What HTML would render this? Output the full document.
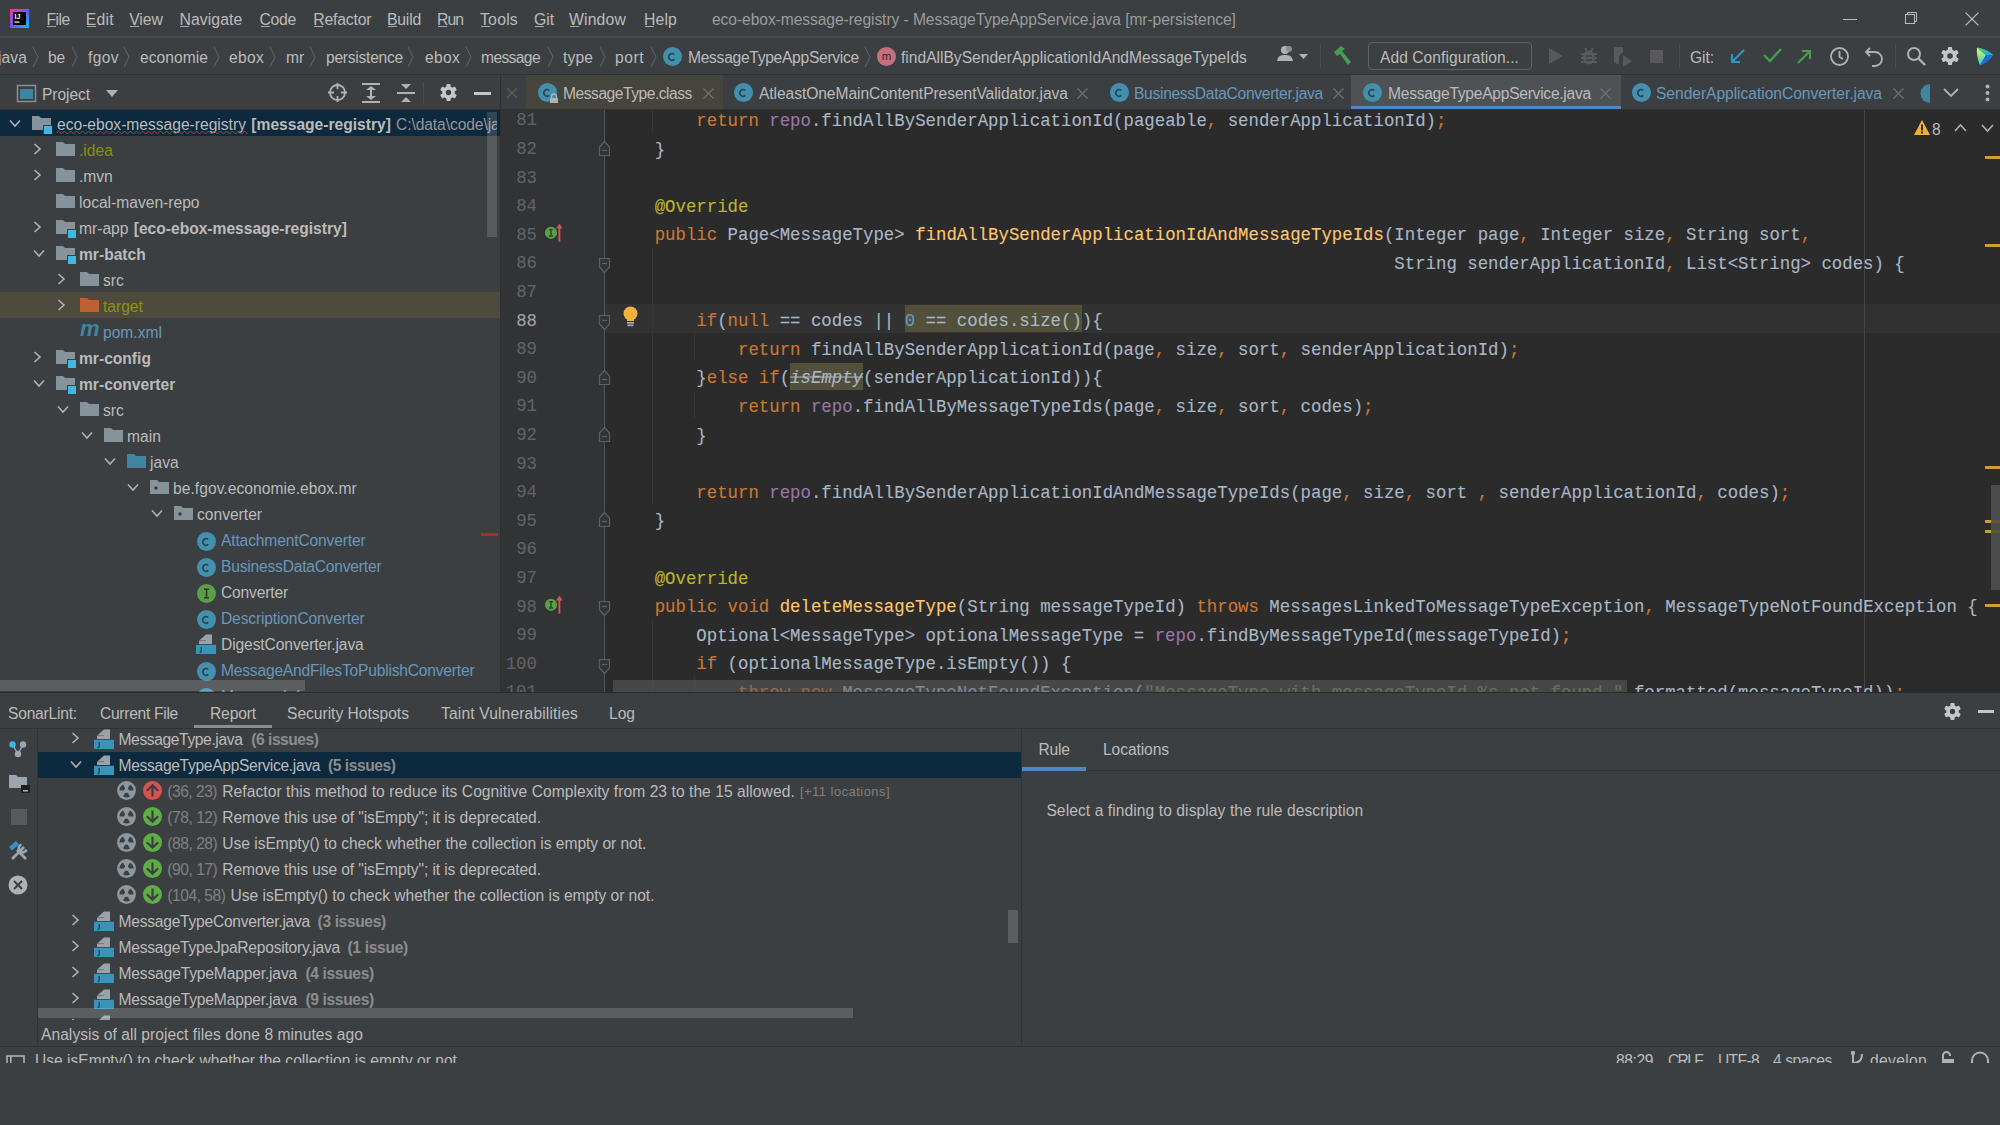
<!DOCTYPE html><html><head><meta charset="utf-8"><style>
html,body{margin:0;padding:0;}
body{width:2000px;height:1125px;overflow:hidden;background:#3C3F41;position:relative;font-family:"Liberation Sans",sans-serif;}
.t{position:absolute;white-space:pre;line-height:1;}
.r{position:absolute;}
.s{position:absolute;overflow:visible;}
.code{position:absolute;font-family:"Liberation Mono",monospace;white-space:pre;line-height:28.6px;transform:scaleY(1.07);transform-origin:0 19px;-webkit-text-stroke:0.12px currentColor;}
.k{color:#CC7832}.f{color:#9876AA}.m{color:#FFC66D}.a{color:#BBB529}.n{color:#6897BB}.st{color:#6A8759}
</style></head><body>
<div class="r" style="left:0px;top:36px;width:2000px;height:2px;background:#48494B;"></div>
<svg class="s" style="left:10px;top:9px;" width="19" height="19" viewBox="0 0 19 19"><defs><linearGradient id="lg" x1="0" y1="0" x2="1" y2="1"><stop offset="0" stop-color="#FF318C"/><stop offset="0.5" stop-color="#6B57FF"/><stop offset="1" stop-color="#07C3F2"/></linearGradient></defs><rect x="0" y="0" width="19" height="19" fill="url(#lg)"/><rect x="3" y="3" width="13" height="13" fill="#000"/><text x="4.5" y="10" font-size="7" font-weight="bold" fill="#fff" font-family="Liberation Sans">IJ</text><rect x="4.5" y="12.5" width="5" height="1.2" fill="#fff"/></svg>
<div class="t " style="left:46.4px;top:12.0px;font-size:15.8px;color:#BBBBBB;letter-spacing:-0.539px;">File</div>
<div class="r" style="left:47px;top:26px;width:9px;height:1px;background:#BBBBBB;opacity:.85"></div>
<div class="t " style="left:85.8px;top:12.0px;font-size:15.8px;color:#BBBBBB;letter-spacing:0.194px;">Edit</div>
<div class="r" style="left:87px;top:26px;width:9px;height:1px;background:#BBBBBB;opacity:.85"></div>
<div class="t " style="left:129.2px;top:12.0px;font-size:15.8px;color:#BBBBBB;letter-spacing:-0.090px;">View</div>
<div class="r" style="left:130px;top:26px;width:9px;height:1px;background:#BBBBBB;opacity:.85"></div>
<div class="t " style="left:179.4px;top:12.0px;font-size:15.8px;color:#BBBBBB;letter-spacing:0.081px;">Navigate</div>
<div class="r" style="left:180px;top:26px;width:9px;height:1px;background:#BBBBBB;opacity:.85"></div>
<div class="t " style="left:259.5px;top:12.0px;font-size:15.8px;color:#BBBBBB;letter-spacing:-0.367px;">Code</div>
<div class="r" style="left:261px;top:26px;width:9px;height:1px;background:#BBBBBB;opacity:.85"></div>
<div class="t " style="left:313.3px;top:12.0px;font-size:15.8px;color:#BBBBBB;letter-spacing:-0.214px;">Refactor</div>
<div class="r" style="left:314px;top:26px;width:9px;height:1px;background:#BBBBBB;opacity:.85"></div>
<div class="t " style="left:387.0px;top:12.0px;font-size:15.8px;color:#BBBBBB;letter-spacing:-0.227px;">Build</div>
<div class="r" style="left:388px;top:26px;width:9px;height:1px;background:#BBBBBB;opacity:.85"></div>
<div class="t " style="left:437.0px;top:12.0px;font-size:15.8px;color:#BBBBBB;letter-spacing:-0.994px;">Run</div>
<div class="r" style="left:438px;top:26px;width:9px;height:1px;background:#BBBBBB;opacity:.85"></div>
<div class="t " style="left:480.0px;top:12.0px;font-size:15.8px;color:#BBBBBB;letter-spacing:0.223px;">Tools</div>
<div class="r" style="left:481px;top:26px;width:9px;height:1px;background:#BBBBBB;opacity:.85"></div>
<div class="t " style="left:534.0px;top:12.0px;font-size:15.8px;color:#BBBBBB;letter-spacing:-0.063px;">Git</div>
<div class="r" style="left:535px;top:26px;width:9px;height:1px;background:#BBBBBB;opacity:.85"></div>
<div class="t " style="left:569.0px;top:12.0px;font-size:15.8px;color:#BBBBBB;letter-spacing:0.134px;">Window</div>
<div class="r" style="left:570px;top:26px;width:9px;height:1px;background:#BBBBBB;opacity:.85"></div>
<div class="t " style="left:644.0px;top:12.0px;font-size:15.8px;color:#BBBBBB;letter-spacing:0.127px;">Help</div>
<div class="r" style="left:645px;top:26px;width:9px;height:1px;background:#BBBBBB;opacity:.85"></div>
<div class="t " style="left:712.0px;top:12.2px;font-size:15.6px;color:#9A9C9E;letter-spacing:-0.068px;">eco-ebox-message-registry - MessageTypeAppService.java [mr-persistence]</div>
<div class="r" style="left:1843px;top:19px;width:14px;height:1px;background:#BBBBBB;"></div>
<svg class="s" style="left:1904px;top:11px;" width="14" height="14" viewBox="0 0 14 14"><rect x="1.5" y="3.5" width="9" height="9" fill="none" stroke="#BBB" stroke-width="1"/><path d="M3.5 3.5V1.5H12.5V10.5H10.5" fill="none" stroke="#BBB" stroke-width="1"/></svg>
<svg class="s" style="left:1965px;top:12px;" width="14" height="14" viewBox="0 0 14 14"><path d="M0.6 0.6L13.4 13.4M13.4 0.6L0.6 13.4" stroke="#BBB" stroke-width="1.3"/></svg>
<div class="r" style="left:0px;top:74px;width:2000px;height:1px;background:#323232;"></div>
<div class="t " style="left:-2.0px;top:49.8px;font-size:15.6px;color:#BBBBBB;letter-spacing:0.096px;">java</div>
<div class="t " style="left:48.0px;top:49.8px;font-size:15.6px;color:#BBBBBB;letter-spacing:-0.175px;">be</div>
<div class="t " style="left:88.0px;top:49.8px;font-size:15.6px;color:#BBBBBB;letter-spacing:0.379px;">fgov</div>
<div class="t " style="left:140.0px;top:49.8px;font-size:15.6px;color:#BBBBBB;letter-spacing:0.046px;">economie</div>
<div class="t " style="left:229.0px;top:49.8px;font-size:15.6px;color:#BBBBBB;letter-spacing:0.294px;">ebox</div>
<div class="t " style="left:286.0px;top:49.8px;font-size:15.6px;color:#BBBBBB;letter-spacing:-0.094px;">mr</div>
<div class="t " style="left:326.0px;top:49.8px;font-size:15.6px;color:#BBBBBB;letter-spacing:-0.252px;">persistence</div>
<div class="t " style="left:425.0px;top:49.8px;font-size:15.6px;color:#BBBBBB;letter-spacing:0.294px;">ebox</div>
<div class="t " style="left:481.0px;top:49.8px;font-size:15.6px;color:#BBBBBB;letter-spacing:-0.614px;">message</div>
<div class="t " style="left:563.0px;top:49.8px;font-size:15.6px;color:#BBBBBB;letter-spacing:0.129px;">type</div>
<div class="t " style="left:615.0px;top:49.8px;font-size:15.6px;color:#BBBBBB;letter-spacing:0.530px;">port</div>
<svg class="s" style="left:32px;top:46px;" width="8" height="22" viewBox="0 0 8 22"><path d="M1 1L6 11L1 21" fill="none" stroke="#5E6060" stroke-width="1.1"/></svg>
<svg class="s" style="left:71px;top:46px;" width="8" height="22" viewBox="0 0 8 22"><path d="M1 1L6 11L1 21" fill="none" stroke="#5E6060" stroke-width="1.1"/></svg>
<svg class="s" style="left:123px;top:46px;" width="8" height="22" viewBox="0 0 8 22"><path d="M1 1L6 11L1 21" fill="none" stroke="#5E6060" stroke-width="1.1"/></svg>
<svg class="s" style="left:212.5px;top:46px;" width="8" height="22" viewBox="0 0 8 22"><path d="M1 1L6 11L1 21" fill="none" stroke="#5E6060" stroke-width="1.1"/></svg>
<svg class="s" style="left:268.5px;top:46px;" width="8" height="22" viewBox="0 0 8 22"><path d="M1 1L6 11L1 21" fill="none" stroke="#5E6060" stroke-width="1.1"/></svg>
<svg class="s" style="left:309px;top:46px;" width="8" height="22" viewBox="0 0 8 22"><path d="M1 1L6 11L1 21" fill="none" stroke="#5E6060" stroke-width="1.1"/></svg>
<svg class="s" style="left:407px;top:46px;" width="8" height="22" viewBox="0 0 8 22"><path d="M1 1L6 11L1 21" fill="none" stroke="#5E6060" stroke-width="1.1"/></svg>
<svg class="s" style="left:464.5px;top:46px;" width="8" height="22" viewBox="0 0 8 22"><path d="M1 1L6 11L1 21" fill="none" stroke="#5E6060" stroke-width="1.1"/></svg>
<svg class="s" style="left:547px;top:46px;" width="8" height="22" viewBox="0 0 8 22"><path d="M1 1L6 11L1 21" fill="none" stroke="#5E6060" stroke-width="1.1"/></svg>
<svg class="s" style="left:599px;top:46px;" width="8" height="22" viewBox="0 0 8 22"><path d="M1 1L6 11L1 21" fill="none" stroke="#5E6060" stroke-width="1.1"/></svg>
<svg class="s" style="left:650px;top:46px;" width="8" height="22" viewBox="0 0 8 22"><path d="M1 1L6 11L1 21" fill="none" stroke="#5E6060" stroke-width="1.1"/></svg>
<svg class="s" style="left:863.5px;top:46px;" width="8" height="22" viewBox="0 0 8 22"><path d="M1 1L6 11L1 21" fill="none" stroke="#5E6060" stroke-width="1.1"/></svg>
<svg class="s" style="left:663px;top:47px;" width="19" height="19" viewBox="0 0 19 19"><circle cx="9.5" cy="9.5" r="9.5" fill="#4290AD"/><path d="M11.31 7.45A3.30 3.30 0 1 0 11.31 12.35" fill="none" stroke="#2A414B" stroke-width="1.50"/></svg>
<div class="t " style="left:688.0px;top:49.8px;font-size:15.6px;color:#BBBBBB;letter-spacing:-0.280px;">MessageTypeAppService</div>
<svg class="s" style="left:877px;top:47px;" width="19" height="19" viewBox="0 0 19 19"><circle cx="9.5" cy="9.5" r="9.5" fill="#C4707E"/><text x="9.5" y="13.299999999999999" text-anchor="middle" font-size="11.5" font-weight="normal" fill="#33292B" font-family="Liberation Sans">m</text></svg>
<div class="t " style="left:901.0px;top:49.8px;font-size:15.6px;color:#BBBBBB;letter-spacing:0.000px;">findAllBySenderApplicationIdAndMessageTypeIds</div>
<svg class="s" style="left:1277px;top:45px;" width="34" height="20" viewBox="0 0 34 20"><circle cx="8" cy="5" r="4" fill="#AFB1B3"/><path d="M0 16Q1 9 8 10Q15 9 16 16Z" fill="#AFB1B3"/><circle cx="12" cy="4" r="3" fill="#8C8E90"/><path d="M22 9L31 9L26.5 14Z" fill="#AFB1B3"/></svg>
<div class="r" style="left:1320px;top:44px;width:1px;height:24px;background:#4B4D4F;"></div>
<svg class="s" style="left:1332px;top:45px;" width="22" height="22" viewBox="0 0 22 22"><path d="M2 7L9 1L13 4L10 6L19 17L16 20L8 9L5 11Z" fill="#499C54"/></svg>
<div class="r" style="left:1367.5px;top:42px;width:164px;height:28px;border:1.5px solid #5E6060;border-radius:4px;box-sizing:border-box;"></div>
<div class="t " style="left:1380.0px;top:49.8px;font-size:15.6px;color:#BBBBBB;letter-spacing:0.056px;">Add Configuration...</div>
<svg class="s" style="left:1549px;top:48px;" width="14" height="16" viewBox="0 0 14 16"><path d="M0 0L14 8L0 16Z" fill="#59595B"/></svg>
<svg class="s" style="left:1580px;top:46px;" width="18" height="20" viewBox="0 0 18 20"><ellipse cx="9" cy="11.5" rx="6" ry="7" fill="#59595B"/><path d="M1 8H17M1 12H17M1 16H17M5 2L7 5M13 2L11 5" stroke="#59595B" stroke-width="2"/><path d="M6 10H12M6 14H12" stroke="#3C3F41" stroke-width="1.3"/></svg>
<svg class="s" style="left:1612px;top:46px;" width="22" height="22" viewBox="0 0 22 22"><path d="M2 1H11V6L7 10V19L2 16Z" fill="#59595B"/><path d="M11 9L20 15L11 21Z" fill="#59595B"/></svg>
<div class="r" style="left:1650px;top:50px;width:13px;height:13px;background:#59595B;"></div>
<div class="r" style="left:1679px;top:44px;width:1px;height:24px;background:#4B4D4F;"></div>
<div class="t " style="left:1690.0px;top:49.8px;font-size:15.6px;color:#BBBBBB;letter-spacing:-0.067px;">Git:</div>
<svg class="s" style="left:1729px;top:48px;" width="17" height="17" viewBox="0 0 17 17"><path d="M15 2L3 14M3 6V14H11" fill="none" stroke="#3592C4" stroke-width="2.2"/></svg>
<svg class="s" style="left:1763px;top:48px;" width="19" height="15" viewBox="0 0 19 15"><path d="M1 7L7 13L18 1" fill="none" stroke="#499C54" stroke-width="2.4"/></svg>
<svg class="s" style="left:1796px;top:48px;" width="17" height="17" viewBox="0 0 17 17"><path d="M2 15L14 3M6 3H14V11" fill="none" stroke="#499C54" stroke-width="2.2"/></svg>
<svg class="s" style="left:1829px;top:46px;" width="21" height="21" viewBox="0 0 21 21"><circle cx="10.5" cy="10.5" r="8.5" fill="none" stroke="#AFB1B3" stroke-width="1.8"/><path d="M10.5 5V11L14 13" fill="none" stroke="#AFB1B3" stroke-width="1.8"/></svg>
<svg class="s" style="left:1864px;top:46px;" width="20" height="21" viewBox="0 0 20 21"><path d="M6 2L2 6L6 10" fill="none" stroke="#AFB1B3" stroke-width="1.8"/><path d="M2 6H11A7 7 0 0 1 11 20H8" fill="none" stroke="#AFB1B3" stroke-width="1.8"/></svg>
<div class="r" style="left:1895px;top:44px;width:1px;height:24px;background:#4B4D4F;"></div>
<svg class="s" style="left:1906px;top:46px;" width="21" height="21" viewBox="0 0 21 21"><circle cx="8" cy="8" r="6" fill="none" stroke="#AFB1B3" stroke-width="2"/><path d="M12.5 12.5L19 19" stroke="#AFB1B3" stroke-width="2.4"/></svg>
<svg class="s" style="left:1941px;top:47px;" width="18" height="18" viewBox="0 0 18 18"><rect x="6.90" y="0" width="4.2" height="6.30" rx="0.8" fill="#C4C6C8" transform="rotate(0 9.0 9.0)"/><rect x="6.90" y="0" width="4.2" height="6.30" rx="0.8" fill="#C4C6C8" transform="rotate(60 9.0 9.0)"/><rect x="6.90" y="0" width="4.2" height="6.30" rx="0.8" fill="#C4C6C8" transform="rotate(120 9.0 9.0)"/><rect x="6.90" y="0" width="4.2" height="6.30" rx="0.8" fill="#C4C6C8" transform="rotate(180 9.0 9.0)"/><rect x="6.90" y="0" width="4.2" height="6.30" rx="0.8" fill="#C4C6C8" transform="rotate(240 9.0 9.0)"/><rect x="6.90" y="0" width="4.2" height="6.30" rx="0.8" fill="#C4C6C8" transform="rotate(300 9.0 9.0)"/><circle cx="9.0" cy="9.0" r="6.66" fill="#C4C6C8"/><circle cx="9.0" cy="9.0" r="2.79" fill="#3C3F41"/></svg>
<svg class="s" style="left:1975px;top:46px;" width="20" height="21" viewBox="0 0 20 21"><defs><linearGradient id="tb1" x1="0" y1="0" x2="0" y2="1"><stop offset="0" stop-color="#F4F53E"/><stop offset="1" stop-color="#21C8E8"/></linearGradient><linearGradient id="tb2" x1="0" y1="0" x2="1" y2="1"><stop offset="0" stop-color="#3DDC84"/><stop offset="1" stop-color="#1FA3E8"/></linearGradient></defs><path d="M2 1.5Q1 10 5 19.5L11 9Z" fill="url(#tb1)"/><path d="M2 1.5Q12 3 18.5 9L11 9Z" fill="url(#tb2)"/><path d="M11 9L18.5 9Q13 17 5 19.5Z" fill="#1D6FD6"/></svg>
<div class="r" style="left:0px;top:109px;width:2000px;height:1px;background:#323232;"></div>
<svg class="s" style="left:17px;top:85px;" width="19" height="17" viewBox="0 0 19 17"><rect x="0.5" y="0.5" width="18" height="16" fill="none" stroke="#8B8D8F" stroke-width="1.5"/><rect x="3" y="4" width="13" height="10" fill="#3E86A0"/></svg>
<div class="t " style="left:42.0px;top:86.8px;font-size:15.6px;color:#BBBBBB;letter-spacing:-0.079px;">Project</div>
<svg class="s" style="left:106px;top:90px;" width="13" height="8" viewBox="0 0 13 8"><path d="M0 0H12L6 7Z" fill="#AFB1B3"/></svg>
<svg class="s" style="left:328px;top:83px;" width="19" height="19" viewBox="0 0 19 19"><circle cx="9.5" cy="9.5" r="7.5" fill="none" stroke="#AFB1B3" stroke-width="1.8"/><path d="M9.5 0V6M9.5 13V19M0 9.5H6M13 9.5H19" stroke="#AFB1B3" stroke-width="1.8"/></svg>
<svg class="s" style="left:361px;top:83px;" width="20" height="20" viewBox="0 0 20 20"><path d="M1 1H19M1 19H19" stroke="#AFB1B3" stroke-width="2"/><path d="M5 7L10 3L15 7M5 13L10 17L15 13" fill="#AFB1B3"/><rect x="9" y="5" width="2" height="10" fill="#AFB1B3"/></svg>
<svg class="s" style="left:396px;top:83px;" width="20" height="20" viewBox="0 0 20 20"><path d="M1 10H19" stroke="#AFB1B3" stroke-width="2"/><path d="M5 1L10 6L15 1M5 19L10 14L15 19" fill="#AFB1B3"/></svg>
<div class="r" style="left:423px;top:82px;width:1px;height:22px;background:#4B4D4F;"></div>
<svg class="s" style="left:440px;top:84px;" width="17" height="17" viewBox="0 0 17 17"><rect x="6.40" y="0" width="4.2" height="5.95" rx="0.8" fill="#C4C6C8" transform="rotate(0 8.5 8.5)"/><rect x="6.40" y="0" width="4.2" height="5.95" rx="0.8" fill="#C4C6C8" transform="rotate(60 8.5 8.5)"/><rect x="6.40" y="0" width="4.2" height="5.95" rx="0.8" fill="#C4C6C8" transform="rotate(120 8.5 8.5)"/><rect x="6.40" y="0" width="4.2" height="5.95" rx="0.8" fill="#C4C6C8" transform="rotate(180 8.5 8.5)"/><rect x="6.40" y="0" width="4.2" height="5.95" rx="0.8" fill="#C4C6C8" transform="rotate(240 8.5 8.5)"/><rect x="6.40" y="0" width="4.2" height="5.95" rx="0.8" fill="#C4C6C8" transform="rotate(300 8.5 8.5)"/><circle cx="8.5" cy="8.5" r="6.29" fill="#C4C6C8"/><circle cx="8.5" cy="8.5" r="2.63" fill="#3C3F41"/></svg>
<div class="r" style="left:474px;top:92px;width:17px;height:2.6px;background:#C4C6C8;"></div>
<div class="r" style="left:500px;top:75px;width:1px;height:618px;background:#2F3032;"></div>
<svg class="s" style="left:506px;top:87px;" width="12" height="12" viewBox="0 0 12 12"><path d="M1 1L11 11M11 1L1 11" stroke="#5E6060" stroke-width="1.2"/></svg>
<div class="r" style="left:526px;top:75px;width:197px;height:34px;background:#45443D;"></div>
<svg class="s" style="left:538px;top:83px;" width="19" height="19" viewBox="0 0 19 19"><circle cx="9.5" cy="9.5" r="9.5" fill="#4290AD"/><path d="M11.31 7.45A3.30 3.30 0 1 0 11.31 12.35" fill="none" stroke="#2A414B" stroke-width="1.50"/></svg>
<svg class="s" style="left:550px;top:94px;" width="9" height="9" viewBox="0 0 9 9"><rect x="0" y="4" width="8" height="5" fill="#AFB1B3"/><path d="M1.5 4.5V2.5A2.5 2.5 0 0 1 6.5 2.5V4.5" fill="none" stroke="#AFB1B3" stroke-width="1.4"/></svg>
<div class="t " style="left:563.0px;top:85.8px;font-size:15.6px;color:#BBBBBB;letter-spacing:-0.470px;">MessageType.class</div>
<svg class="s" style="left:703px;top:88px;" width="11" height="11" viewBox="0 0 11 11"><path d="M0.5 0.5L10.5 10.5M10.5 0.5L0.5 10.5" stroke="#6E7072" stroke-width="1.2"/></svg>
<svg class="s" style="left:734px;top:83px;" width="19" height="19" viewBox="0 0 19 19"><circle cx="9.5" cy="9.5" r="9.5" fill="#4290AD"/><path d="M11.31 7.45A3.30 3.30 0 1 0 11.31 12.35" fill="none" stroke="#2A414B" stroke-width="1.50"/></svg>
<div class="t " style="left:759.0px;top:85.8px;font-size:15.6px;color:#BBBBBB;letter-spacing:-0.068px;">AtleastOneMainContentPresentValidator.java</div>
<svg class="s" style="left:1077px;top:88px;" width="11" height="11" viewBox="0 0 11 11"><path d="M0.5 0.5L10.5 10.5M10.5 0.5L0.5 10.5" stroke="#6E7072" stroke-width="1.2"/></svg>
<svg class="s" style="left:1110px;top:83px;" width="19" height="19" viewBox="0 0 19 19"><circle cx="9.5" cy="9.5" r="9.5" fill="#4290AD"/><path d="M11.31 7.45A3.30 3.30 0 1 0 11.31 12.35" fill="none" stroke="#2A414B" stroke-width="1.50"/></svg>
<div class="t " style="left:1134.0px;top:85.8px;font-size:15.6px;color:#6897BB;letter-spacing:-0.301px;">BusinessDataConverter.java</div>
<svg class="s" style="left:1333px;top:88px;" width="11" height="11" viewBox="0 0 11 11"><path d="M0.5 0.5L10.5 10.5M10.5 0.5L0.5 10.5" stroke="#6E7072" stroke-width="1.2"/></svg>
<div class="r" style="left:1351px;top:75px;width:270px;height:34px;background:#4E5254;"></div>
<div class="r" style="left:1351px;top:106px;width:270px;height:3px;background:#4A88C7;"></div>
<svg class="s" style="left:1363px;top:83px;" width="19" height="19" viewBox="0 0 19 19"><circle cx="9.5" cy="9.5" r="9.5" fill="#4290AD"/><path d="M11.31 7.45A3.30 3.30 0 1 0 11.31 12.35" fill="none" stroke="#2A414B" stroke-width="1.50"/></svg>
<div class="t " style="left:1388.0px;top:85.8px;font-size:15.6px;color:#BBBBBB;letter-spacing:-0.263px;">MessageTypeAppService.java</div>
<svg class="s" style="left:1600px;top:88px;" width="11" height="11" viewBox="0 0 11 11"><path d="M0.5 0.5L10.5 10.5M10.5 0.5L0.5 10.5" stroke="#6E7072" stroke-width="1.2"/></svg>
<svg class="s" style="left:1632px;top:83px;" width="19" height="19" viewBox="0 0 19 19"><circle cx="9.5" cy="9.5" r="9.5" fill="#4290AD"/><path d="M11.31 7.45A3.30 3.30 0 1 0 11.31 12.35" fill="none" stroke="#2A414B" stroke-width="1.50"/></svg>
<div class="t " style="left:1656.0px;top:85.8px;font-size:15.6px;color:#6897BB;letter-spacing:-0.038px;">SenderApplicationConverter.java</div>
<svg class="s" style="left:1893px;top:88px;" width="11" height="11" viewBox="0 0 11 11"><path d="M0.5 0.5L10.5 10.5M10.5 0.5L0.5 10.5" stroke="#6E7072" stroke-width="1.2"/></svg>
<svg class="s" style="left:1922px;top:84px;" width="9" height="19" viewBox="0 0 9 19"><path d="M8 0A9.5 9.5 0 0 0 8 19Z" fill="#3E86A0"/></svg>
<svg class="s" style="left:1943px;top:88px;" width="16" height="10" viewBox="0 0 16 10"><path d="M1 1L8 8L15 1" fill="none" stroke="#AFB1B3" stroke-width="1.8"/></svg>
<svg class="s" style="left:1985px;top:84px;" width="5" height="18" viewBox="0 0 5 18"><circle cx="2.5" cy="2.5" r="2" fill="#AFB1B3"/><circle cx="2.5" cy="9" r="2" fill="#AFB1B3"/><circle cx="2.5" cy="15.5" r="2" fill="#AFB1B3"/></svg>
<div class="r" style="left:0px;top:110px;width:500px;height:26px;background:#0D293E;"></div>
<div class="r" style="left:0px;top:292px;width:500px;height:26px;background:#4E4A3D;"></div>
<svg class="s" style="left:9px;top:119px;" width="12" height="9" viewBox="0 0 12 9"><path d="M1 1.5L6 7L11 1.5" fill="none" stroke="#AFB1B3" stroke-width="1.6"/></svg>
<svg class="s" style="left:32px;top:115px;" width="21" height="20" viewBox="0 0 21 20"><path d="M0 1H7L9 3H19V15H0Z" fill="#87939A"/><rect x="11" y="10" width="9" height="9" fill="#3C3F41"/><rect x="12" y="11" width="8" height="8" fill="#40B6E0"/></svg>
<div class="t " style="left:57.0px;top:117.1px;font-size:15.6px;color:#BBBBBB;">eco-ebox-message-registry</div>
<div class="t " style="left:247.0px;top:117.1px;font-size:15.6px;color:#BBBBBB;font-weight:bold;"> [message-registry]</div>
<svg class="s" style="left:33px;top:143px;" width="9" height="12" viewBox="0 0 9 12"><path d="M1.5 1L7 6L1.5 11" fill="none" stroke="#AFB1B3" stroke-width="1.6"/></svg>
<svg class="s" style="left:56px;top:141px;" width="21" height="20" viewBox="0 0 21 20"><path d="M0 1H7L9 3H19V15H0Z" fill="#87939A"/></svg>
<div class="t " style="left:79.0px;top:143.1px;font-size:15.6px;color:#889010;letter-spacing:0.000px;">.idea</div>
<svg class="s" style="left:33px;top:169px;" width="9" height="12" viewBox="0 0 9 12"><path d="M1.5 1L7 6L1.5 11" fill="none" stroke="#AFB1B3" stroke-width="1.6"/></svg>
<svg class="s" style="left:56px;top:167px;" width="21" height="20" viewBox="0 0 21 20"><path d="M0 1H7L9 3H19V15H0Z" fill="#87939A"/></svg>
<div class="t " style="left:79.0px;top:169.1px;font-size:15.6px;color:#BBBBBB;">.mvn</div>
<svg class="s" style="left:56px;top:193px;" width="21" height="20" viewBox="0 0 21 20"><path d="M0 1H7L9 3H19V15H0Z" fill="#87939A"/></svg>
<div class="t " style="left:79.0px;top:195.1px;font-size:15.6px;color:#BBBBBB;letter-spacing:-0.000px;">local-maven-repo</div>
<svg class="s" style="left:33px;top:221px;" width="9" height="12" viewBox="0 0 9 12"><path d="M1.5 1L7 6L1.5 11" fill="none" stroke="#AFB1B3" stroke-width="1.6"/></svg>
<svg class="s" style="left:56px;top:219px;" width="21" height="20" viewBox="0 0 21 20"><path d="M0 1H7L9 3H19V15H0Z" fill="#87939A"/><rect x="11" y="10" width="9" height="9" fill="#3C3F41"/><rect x="12" y="11" width="8" height="8" fill="#40B6E0"/></svg>
<div class="t " style="left:79.0px;top:221.1px;font-size:15.6px;color:#BBBBBB;letter-spacing:0.000px;">mr-app</div>
<div class="t " style="left:129.4px;top:221.1px;font-size:15.6px;color:#BBBBBB;letter-spacing:-0.000px;font-weight:bold;"> [eco-ebox-message-registry]</div>
<svg class="s" style="left:33px;top:249px;" width="12" height="9" viewBox="0 0 12 9"><path d="M1 1.5L6 7L11 1.5" fill="none" stroke="#AFB1B3" stroke-width="1.6"/></svg>
<svg class="s" style="left:56px;top:245px;" width="21" height="20" viewBox="0 0 21 20"><path d="M0 1H7L9 3H19V15H0Z" fill="#87939A"/><rect x="11" y="10" width="9" height="9" fill="#3C3F41"/><rect x="12" y="11" width="8" height="8" fill="#40B6E0"/></svg>
<div class="t " style="left:79.0px;top:247.1px;font-size:15.6px;color:#BBBBBB;font-weight:bold;">mr-batch</div>
<svg class="s" style="left:57px;top:273px;" width="9" height="12" viewBox="0 0 9 12"><path d="M1.5 1L7 6L1.5 11" fill="none" stroke="#AFB1B3" stroke-width="1.6"/></svg>
<svg class="s" style="left:80px;top:271px;" width="21" height="20" viewBox="0 0 21 20"><path d="M0 1H7L9 3H19V15H0Z" fill="#87939A"/></svg>
<div class="t " style="left:103.0px;top:273.1px;font-size:15.6px;color:#BBBBBB;">src</div>
<svg class="s" style="left:57px;top:299px;" width="9" height="12" viewBox="0 0 9 12"><path d="M1.5 1L7 6L1.5 11" fill="none" stroke="#AFB1B3" stroke-width="1.6"/></svg>
<svg class="s" style="left:80px;top:297px;" width="21" height="20" viewBox="0 0 21 20"><path d="M0 1H7L9 3H19V15H0Z" fill="#BD6131"/></svg>
<div class="t " style="left:103.0px;top:299.1px;font-size:15.6px;color:#8A9410;">target</div>
<div class="t " style="left:80.0px;top:318.4px;font-size:22px;color:#3E86A0;font-style:italic;font-weight:bold;letter-spacing:-1px;">m</div>
<div class="t " style="left:103.0px;top:325.1px;font-size:15.6px;color:#6897BB;">pom.xml</div>
<svg class="s" style="left:33px;top:351px;" width="9" height="12" viewBox="0 0 9 12"><path d="M1.5 1L7 6L1.5 11" fill="none" stroke="#AFB1B3" stroke-width="1.6"/></svg>
<svg class="s" style="left:56px;top:349px;" width="21" height="20" viewBox="0 0 21 20"><path d="M0 1H7L9 3H19V15H0Z" fill="#87939A"/><rect x="11" y="10" width="9" height="9" fill="#3C3F41"/><rect x="12" y="11" width="8" height="8" fill="#40B6E0"/></svg>
<div class="t " style="left:79.0px;top:351.1px;font-size:15.6px;color:#BBBBBB;font-weight:bold;">mr-config</div>
<svg class="s" style="left:33px;top:379px;" width="12" height="9" viewBox="0 0 12 9"><path d="M1 1.5L6 7L11 1.5" fill="none" stroke="#AFB1B3" stroke-width="1.6"/></svg>
<svg class="s" style="left:56px;top:375px;" width="21" height="20" viewBox="0 0 21 20"><path d="M0 1H7L9 3H19V15H0Z" fill="#87939A"/><rect x="11" y="10" width="9" height="9" fill="#3C3F41"/><rect x="12" y="11" width="8" height="8" fill="#40B6E0"/></svg>
<div class="t " style="left:79.0px;top:377.1px;font-size:15.6px;color:#BBBBBB;letter-spacing:-0.000px;font-weight:bold;">mr-converter</div>
<svg class="s" style="left:57px;top:405px;" width="12" height="9" viewBox="0 0 12 9"><path d="M1 1.5L6 7L11 1.5" fill="none" stroke="#AFB1B3" stroke-width="1.6"/></svg>
<svg class="s" style="left:80px;top:401px;" width="21" height="20" viewBox="0 0 21 20"><path d="M0 1H7L9 3H19V15H0Z" fill="#87939A"/></svg>
<div class="t " style="left:103.0px;top:403.1px;font-size:15.6px;color:#BBBBBB;">src</div>
<svg class="s" style="left:81px;top:431px;" width="12" height="9" viewBox="0 0 12 9"><path d="M1 1.5L6 7L11 1.5" fill="none" stroke="#AFB1B3" stroke-width="1.6"/></svg>
<svg class="s" style="left:104px;top:427px;" width="21" height="20" viewBox="0 0 21 20"><path d="M0 1H7L9 3H19V15H0Z" fill="#87939A"/></svg>
<div class="t " style="left:127.0px;top:429.1px;font-size:15.6px;color:#BBBBBB;">main</div>
<svg class="s" style="left:104px;top:457px;" width="12" height="9" viewBox="0 0 12 9"><path d="M1 1.5L6 7L11 1.5" fill="none" stroke="#AFB1B3" stroke-width="1.6"/></svg>
<svg class="s" style="left:127px;top:453px;" width="21" height="20" viewBox="0 0 21 20"><path d="M0 1H7L9 3H19V15H0Z" fill="#3E86A0"/></svg>
<div class="t " style="left:150.0px;top:455.1px;font-size:15.6px;color:#BBBBBB;">java</div>
<svg class="s" style="left:127px;top:483px;" width="12" height="9" viewBox="0 0 12 9"><path d="M1 1.5L6 7L11 1.5" fill="none" stroke="#AFB1B3" stroke-width="1.6"/></svg>
<svg class="s" style="left:150px;top:479px;" width="21" height="20" viewBox="0 0 21 20"><path d="M0 1H7L9 3H19V15H0Z" fill="#87939A"/><circle cx="6" cy="9" r="1.8" fill="#3C3F41"/></svg>
<div class="t " style="left:173.0px;top:481.1px;font-size:15.6px;color:#BBBBBB;letter-spacing:0.048px;">be.fgov.economie.ebox.mr</div>
<svg class="s" style="left:151px;top:509px;" width="12" height="9" viewBox="0 0 12 9"><path d="M1 1.5L6 7L11 1.5" fill="none" stroke="#AFB1B3" stroke-width="1.6"/></svg>
<svg class="s" style="left:174px;top:505px;" width="21" height="20" viewBox="0 0 21 20"><path d="M0 1H7L9 3H19V15H0Z" fill="#87939A"/><circle cx="6" cy="9" r="1.8" fill="#3C3F41"/></svg>
<div class="t " style="left:197.0px;top:507.1px;font-size:15.6px;color:#BBBBBB;">converter</div>
<svg class="s" style="left:197px;top:531.5px;" width="19" height="19" viewBox="0 0 19 19"><circle cx="9.5" cy="9.5" r="9.5" fill="#4290AD"/><path d="M11.31 7.45A3.30 3.30 0 1 0 11.31 12.35" fill="none" stroke="#2A414B" stroke-width="1.50"/></svg>
<div class="t " style="left:221.0px;top:533.1px;font-size:15.6px;color:#6897BB;letter-spacing:-0.148px;">AttachmentConverter</div>
<svg class="s" style="left:197px;top:557.5px;" width="19" height="19" viewBox="0 0 19 19"><circle cx="9.5" cy="9.5" r="9.5" fill="#4290AD"/><path d="M11.31 7.45A3.30 3.30 0 1 0 11.31 12.35" fill="none" stroke="#2A414B" stroke-width="1.50"/></svg>
<div class="t " style="left:221.0px;top:559.1px;font-size:15.6px;color:#6897BB;letter-spacing:-0.204px;">BusinessDataConverter</div>
<svg class="s" style="left:197px;top:583.5px;" width="19" height="19" viewBox="0 0 19 19"><circle cx="9.5" cy="9.5" r="9.5" fill="#5A9E48"/><path d="M7 5.2H12M7 13.8H12M9.5 5.2V13.8" fill="none" stroke="#2D3A2A" stroke-width="1.6"/></svg>
<div class="t " style="left:221.0px;top:585.1px;font-size:15.6px;color:#BBBBBB;letter-spacing:-0.163px;">Converter</div>
<svg class="s" style="left:197px;top:609.5px;" width="19" height="19" viewBox="0 0 19 19"><circle cx="9.5" cy="9.5" r="9.5" fill="#4290AD"/><path d="M11.31 7.45A3.30 3.30 0 1 0 11.31 12.35" fill="none" stroke="#2A414B" stroke-width="1.50"/></svg>
<div class="t " style="left:221.0px;top:611.1px;font-size:15.6px;color:#6897BB;letter-spacing:-0.146px;">DescriptionConverter</div>
<svg class="s" style="left:196px;top:634px;" width="21" height="21" viewBox="0 0 21 21"><path d="M10 0.5H16V10H3V6.8L10 0.5Z" fill="#9AA3A9"/><path d="M3 6.3L9.6 0.5V6.3Z" fill="#3C3F41" opacity=".0"/><rect x="3" y="6.2" width="6.8" height="0.9" fill="#555" opacity=".7"/><rect x="0" y="10.8" width="20" height="9.2" fill="#3A93B9"/><path d="M5.2 13V17.2Q5.2 18.6 3.6 18.6" fill="none" stroke="#2B3A42" stroke-width="1.3"/></svg>
<div class="t " style="left:221.0px;top:637.1px;font-size:15.6px;color:#BBBBBB;letter-spacing:-0.103px;">DigestConverter.java</div>
<svg class="s" style="left:197px;top:661.5px;" width="19" height="19" viewBox="0 0 19 19"><circle cx="9.5" cy="9.5" r="9.5" fill="#4290AD"/><path d="M11.31 7.45A3.30 3.30 0 1 0 11.31 12.35" fill="none" stroke="#2A414B" stroke-width="1.50"/></svg>
<div class="t " style="left:221.0px;top:663.1px;font-size:15.6px;color:#6897BB;letter-spacing:-0.200px;">MessageAndFilesToPublishConverter</div>
<svg class="s" style="left:197px;top:687.5px;" width="19" height="19" viewBox="0 0 19 19"><circle cx="9.5" cy="9.5" r="9.5" fill="#4290AD"/><path d="M11.31 7.45A3.30 3.30 0 1 0 11.31 12.35" fill="none" stroke="#2A414B" stroke-width="1.50"/></svg>
<div class="t " style="left:221.0px;top:689.1px;font-size:15.6px;color:#6897BB;letter-spacing:-0.205px;">MessageInfo</div>
<div class="t " style="left:396.0px;top:117.3px;font-size:15.6px;color:#959595;letter-spacing:-0.086px;width:101px;overflow:hidden;">C:\data\code\java</div>
<div class="r" style="left:0px;top:110px;width:0px;height:0px;background:#0D293E;"></div>
<svg class="s" style="left:57px;top:131px;" width="190" height="4" viewBox="0 0 190 4"><path d="M0 2 L1.5 0 L4.5 3 L7.5 0 L10.5 3 L13.5 0 L16.5 3 L19.5 0 L22.5 3 L25.5 0 L28.5 3 L31.5 0 L34.5 3 L37.5 0 L40.5 3 L43.5 0 L46.5 3 L49.5 0 L52.5 3 L55.5 0 L58.5 3 L61.5 0 L64.5 3 L67.5 0 L70.5 3 L73.5 0 L76.5 3 L79.5 0 L82.5 3 L85.5 0 L88.5 3 L91.5 0 L94.5 3 L97.5 0 L100.5 3 L103.5 0 L106.5 3 L109.5 0 L112.5 3 L115.5 0 L118.5 3 L121.5 0 L124.5 3 L127.5 0 L130.5 3 L133.5 0 L136.5 3 L139.5 0 L142.5 3 L145.5 0 L148.5 3 L151.5 0 L154.5 3 L157.5 0 L160.5 3 L163.5 0 L166.5 3 L169.5 0 L172.5 3 L175.5 0 L178.5 3 L181.5 0 L184.5 3 L187.5 0 L190.5 3" fill="none" stroke="#BC3F3C" stroke-width="1"/></svg>
<div class="r" style="left:487px;top:112px;width:10px;height:125px;background:rgba(255,255,255,0.14);"></div>
<div class="r" style="left:481px;top:533px;width:17px;height:3px;background:#B0292C;"></div>
<div class="r" style="left:0px;top:680px;width:305px;height:11px;background:rgba(255,255,255,0.16);"></div>
<div class="r" style="left:501px;top:110px;width:1499px;height:583px;background:#2B2B2B;"></div>
<div class="r" style="left:501px;top:110px;width:103px;height:583px;background:#313335;"></div>
<div class="r" style="left:605px;top:304px;width:1395px;height:29px;background:#323232;"></div>
<div class="r" style="left:1864px;top:110px;width:1px;height:583px;background:#464646;"></div>
<div class="r" style="left:652px;top:248px;width:1px;height:257px;background:#373737;"></div>
<div class="r" style="left:652px;top:110px;width:1px;height:23px;background:#373737;"></div>
<div class="r" style="left:652px;top:619px;width:1px;height:74px;background:#373737;"></div>
<div class="r" style="left:694px;top:333px;width:1px;height:28px;background:#373737;"></div>
<div class="r" style="left:694px;top:391px;width:1px;height:27px;background:#373737;"></div>
<div class="r" style="left:694px;top:676px;width:1px;height:17px;background:#373737;"></div>
<div class="r" style="left:604px;top:110px;width:1px;height:583px;background:#555555;"></div>
<div class="r" style="left:905px;top:305px;width:177px;height:27px;background:#52503A;"></div>
<div class="r" style="left:790px;top:363px;width:73px;height:27px;background:#52503A;"></div>
<div class="code" style="left:516.2px;top:107.4px;font-size:17.36px;color:#606366">81</div>
<div class="code" style="left:613px;top:107.9px;font-size:17.36px;color:#A9B7C6">        <span class="k">return</span> <span class="f">repo</span>.findAllBySenderApplicationId(pageable<span class="k">,</span> senderApplicationId)<span class="k">;</span></div>
<div class="code" style="left:516.2px;top:136.0px;font-size:17.36px;color:#606366">82</div>
<div class="code" style="left:613px;top:136.5px;font-size:17.36px;color:#A9B7C6">    }</div>
<div class="code" style="left:516.2px;top:164.6px;font-size:17.36px;color:#606366">83</div>
<div class="code" style="left:613px;top:165.1px;font-size:17.36px;color:#A9B7C6"></div>
<div class="code" style="left:516.2px;top:193.2px;font-size:17.36px;color:#606366">84</div>
<div class="code" style="left:613px;top:193.7px;font-size:17.36px;color:#A9B7C6">    <span class="a">@Override</span></div>
<div class="code" style="left:516.2px;top:221.8px;font-size:17.36px;color:#606366">85</div>
<div class="code" style="left:613px;top:222.3px;font-size:17.36px;color:#A9B7C6">    <span class="k">public</span> Page&lt;MessageType&gt; <span class="m">findAllBySenderApplicationIdAndMessageTypeIds</span>(Integer page<span class="k">,</span> Integer size<span class="k">,</span> String sort<span class="k">,</span></div>
<div class="code" style="left:516.2px;top:250.4px;font-size:17.36px;color:#606366">86</div>
<div class="code" style="left:613px;top:250.9px;font-size:17.36px;color:#A9B7C6">                                                                           String senderApplicationId<span class="k">,</span> List&lt;String&gt; codes) {</div>
<div class="code" style="left:516.2px;top:279.0px;font-size:17.36px;color:#606366">87</div>
<div class="code" style="left:613px;top:279.5px;font-size:17.36px;color:#A9B7C6"></div>
<div class="code" style="left:516.2px;top:307.6px;font-size:17.36px;color:#A4A3A3">88</div>
<div class="code" style="left:613px;top:308.1px;font-size:17.36px;color:#A9B7C6">        <span class="k">if</span>(<span class="k">null</span> == codes || <span class="n">0</span> == codes.size()){</div>
<div class="code" style="left:516.2px;top:336.2px;font-size:17.36px;color:#606366">89</div>
<div class="code" style="left:613px;top:336.7px;font-size:17.36px;color:#A9B7C6">            <span class="k">return</span> findAllBySenderApplicationId(page<span class="k">,</span> size<span class="k">,</span> sort<span class="k">,</span> senderApplicationId)<span class="k">;</span></div>
<div class="code" style="left:516.2px;top:364.8px;font-size:17.36px;color:#606366">90</div>
<div class="code" style="left:613px;top:365.3px;font-size:17.36px;color:#A9B7C6">        }<span class="k">else if</span>(<span style="font-style:italic;text-decoration:line-through">isEmpty</span>(senderApplicationId)){</div>
<div class="code" style="left:516.2px;top:393.4px;font-size:17.36px;color:#606366">91</div>
<div class="code" style="left:613px;top:393.9px;font-size:17.36px;color:#A9B7C6">            <span class="k">return</span> <span class="f">repo</span>.findAllByMessageTypeIds(page<span class="k">,</span> size<span class="k">,</span> sort<span class="k">,</span> codes)<span class="k">;</span></div>
<div class="code" style="left:516.2px;top:422.0px;font-size:17.36px;color:#606366">92</div>
<div class="code" style="left:613px;top:422.5px;font-size:17.36px;color:#A9B7C6">        }</div>
<div class="code" style="left:516.2px;top:450.6px;font-size:17.36px;color:#606366">93</div>
<div class="code" style="left:613px;top:451.1px;font-size:17.36px;color:#A9B7C6"></div>
<div class="code" style="left:516.2px;top:479.2px;font-size:17.36px;color:#606366">94</div>
<div class="code" style="left:613px;top:479.7px;font-size:17.36px;color:#A9B7C6">        <span class="k">return</span> <span class="f">repo</span>.findAllBySenderApplicationIdAndMessageTypeIds(page<span class="k">,</span> size<span class="k">,</span> sort <span class="k">,</span> senderApplicationId<span class="k">,</span> codes)<span class="k">;</span></div>
<div class="code" style="left:516.2px;top:507.8px;font-size:17.36px;color:#606366">95</div>
<div class="code" style="left:613px;top:508.3px;font-size:17.36px;color:#A9B7C6">    }</div>
<div class="code" style="left:516.2px;top:536.4px;font-size:17.36px;color:#606366">96</div>
<div class="code" style="left:613px;top:536.9px;font-size:17.36px;color:#A9B7C6"></div>
<div class="code" style="left:516.2px;top:565.0px;font-size:17.36px;color:#606366">97</div>
<div class="code" style="left:613px;top:565.5px;font-size:17.36px;color:#A9B7C6">    <span class="a">@Override</span></div>
<div class="code" style="left:516.2px;top:593.6px;font-size:17.36px;color:#606366">98</div>
<div class="code" style="left:613px;top:594.1px;font-size:17.36px;color:#A9B7C6">    <span class="k">public void</span> <span class="m">deleteMessageType</span>(String messageTypeId) <span class="k">throws</span> MessagesLinkedToMessageTypeException<span class="k">,</span> MessageTypeNotFoundException {</div>
<div class="code" style="left:516.2px;top:622.2px;font-size:17.36px;color:#606366">99</div>
<div class="code" style="left:613px;top:622.7px;font-size:17.36px;color:#A9B7C6">        Optional&lt;MessageType&gt; optionalMessageType = <span class="f">repo</span>.findByMessageTypeId(messageTypeId)<span class="k">;</span></div>
<div class="code" style="left:505.7px;top:650.8px;font-size:17.36px;color:#606366">100</div>
<div class="code" style="left:613px;top:651.3px;font-size:17.36px;color:#A9B7C6">        <span class="k">if</span> (optionalMessageType.isEmpty()) {</div>
<div class="code" style="left:505.7px;top:679.4px;font-size:17.36px;color:#606366">101</div>
<div class="code" style="left:613px;top:679.9px;font-size:17.36px;color:#A9B7C6">            <span class="k">throw new</span> MessageTypeNotFoundException(<span class="st">&quot;MessageType with messageTypeId %s not found.&quot;</span>.formatted(messageTypeId))<span class="k">;</span></div>
<svg class="s" style="left:544px;top:223px;" width="22" height="22" viewBox="0 0 22 22"><circle cx="7" cy="9.8" r="6.1" fill="#5A9E48"/><path d="M5.2 6.6H8.8M5.2 13H8.8M7 6.6V13" fill="none" stroke="#2D3A2A" stroke-width="1.3"/><path d="M15.4 18.7V4.5" stroke="#D9534F" stroke-width="1.9"/><path d="M12 5.6L15.4 0.8L18.8 5.6Z" fill="#D9534F"/></svg>
<svg class="s" style="left:544px;top:595px;" width="22" height="22" viewBox="0 0 22 22"><circle cx="7" cy="9.8" r="6.1" fill="#5A9E48"/><path d="M5.2 6.6H8.8M5.2 13H8.8M7 6.6V13" fill="none" stroke="#2D3A2A" stroke-width="1.3"/><path d="M15.4 18.7V4.5" stroke="#D9534F" stroke-width="1.9"/><path d="M12 5.6L15.4 0.8L18.8 5.6Z" fill="#D9534F"/></svg>
<svg class="s" style="left:598px;top:257px;" width="13" height="17" viewBox="0 0 13 17"><path d="M1.5 1.5H11.5V10L6.5 15.5L1.5 10Z" fill="#313335" stroke="#5E6060" stroke-width="1.2"/><path d="M4 6.5H9" stroke="#5E6060" stroke-width="1.2"/></svg>
<svg class="s" style="left:598px;top:314px;" width="13" height="17" viewBox="0 0 13 17"><path d="M1.5 1.5H11.5V10L6.5 15.5L1.5 10Z" fill="#313335" stroke="#5E6060" stroke-width="1.2"/><path d="M4 6.5H9" stroke="#5E6060" stroke-width="1.2"/></svg>
<svg class="s" style="left:598px;top:600px;" width="13" height="17" viewBox="0 0 13 17"><path d="M1.5 1.5H11.5V10L6.5 15.5L1.5 10Z" fill="#313335" stroke="#5E6060" stroke-width="1.2"/><path d="M4 6.5H9" stroke="#5E6060" stroke-width="1.2"/></svg>
<svg class="s" style="left:598px;top:658px;" width="13" height="17" viewBox="0 0 13 17"><path d="M1.5 1.5H11.5V10L6.5 15.5L1.5 10Z" fill="#313335" stroke="#5E6060" stroke-width="1.2"/><path d="M4 6.5H9" stroke="#5E6060" stroke-width="1.2"/></svg>
<svg class="s" style="left:598px;top:139.5px;" width="13" height="17" viewBox="0 0 13 17"><path d="M1.5 15.5H11.5V7L6.5 1.5L1.5 7Z" fill="#313335" stroke="#5E6060" stroke-width="1.2"/><path d="M4 10.5H9" stroke="#5E6060" stroke-width="1.2"/></svg>
<svg class="s" style="left:598px;top:368.5px;" width="13" height="17" viewBox="0 0 13 17"><path d="M1.5 15.5H11.5V7L6.5 1.5L1.5 7Z" fill="#313335" stroke="#5E6060" stroke-width="1.2"/><path d="M4 10.5H9" stroke="#5E6060" stroke-width="1.2"/></svg>
<svg class="s" style="left:598px;top:425.5px;" width="13" height="17" viewBox="0 0 13 17"><path d="M1.5 15.5H11.5V7L6.5 1.5L1.5 7Z" fill="#313335" stroke="#5E6060" stroke-width="1.2"/><path d="M4 10.5H9" stroke="#5E6060" stroke-width="1.2"/></svg>
<svg class="s" style="left:598px;top:510.5px;" width="13" height="17" viewBox="0 0 13 17"><path d="M1.5 15.5H11.5V7L6.5 1.5L1.5 7Z" fill="#313335" stroke="#5E6060" stroke-width="1.2"/><path d="M4 10.5H9" stroke="#5E6060" stroke-width="1.2"/></svg>
<svg class="s" style="left:622px;top:306px;" width="17" height="22" viewBox="0 0 17 22"><circle cx="8.5" cy="7.5" r="7" fill="#F4AF3D"/><rect x="5" y="12" width="7" height="3" fill="#F4AF3D"/><rect x="5" y="16" width="7" height="1.6" fill="#AFB1B3"/><rect x="5.5" y="18.5" width="6" height="1.6" fill="#AFB1B3"/></svg>
<svg class="s" style="left:1914px;top:120px;" width="16" height="15" viewBox="0 0 16 15"><path d="M8 0L16 15H0Z" fill="#F4AF3D"/><rect x="7" y="4.5" width="2" height="6" fill="#2B2B2B"/><rect x="7" y="11.5" width="2" height="2" fill="#2B2B2B"/></svg>
<div class="t" style="left:1932px;top:121.8px;font-size:15.6px;color:#BBBBBB">8</div>
<svg class="s" style="left:1954px;top:123px;" width="13" height="9" viewBox="0 0 13 9"><path d="M1 8L6.5 2L12 8" fill="none" stroke="#AFB1B3" stroke-width="1.6"/></svg>
<svg class="s" style="left:1981px;top:124px;" width="13" height="9" viewBox="0 0 13 9"><path d="M1 1L6.5 7L12 1" fill="none" stroke="#AFB1B3" stroke-width="1.6"/></svg>
<div class="r" style="left:1985px;top:156px;width:15px;height:3px;background:#C9A12C;"></div>
<div class="r" style="left:1985px;top:244px;width:15px;height:3px;background:#C9A12C;"></div>
<div class="r" style="left:1985px;top:466px;width:15px;height:3px;background:#C9A12C;"></div>
<div class="r" style="left:1985px;top:520px;width:15px;height:3px;background:#C9A12C;"></div>
<div class="r" style="left:1985px;top:530px;width:15px;height:3px;background:#C9A12C;"></div>
<div class="r" style="left:1985px;top:604px;width:15px;height:3px;background:#C9A12C;"></div>
<div class="r" style="left:1991px;top:485px;width:9px;height:105px;background:#4F4F4F;opacity:.9"></div>
<div class="r" style="left:613px;top:680px;width:1014px;height:12px;background:rgba(95,95,95,0.55);"></div>
<div class="r" style="left:501px;top:693px;width:1499px;height:1px;background:#2B2B2B;"></div>
<div class="r" style="left:0px;top:693px;width:2000px;height:354px;background:#3C3F41;"></div>
<div class="r" style="left:0px;top:692px;width:2000px;height:1px;background:#2B2B2B;"></div>
<div class="r" style="left:0px;top:728px;width:2000px;height:1px;background:#323232;"></div>
<div class="t " style="left:8.0px;top:706.3px;font-size:15.6px;color:#BBBBBB;letter-spacing:-0.211px;">SonarLint:</div>
<div class="t " style="left:100.0px;top:706.3px;font-size:15.6px;color:#BBBBBB;letter-spacing:-0.290px;">Current File</div>
<div class="t " style="left:210.0px;top:706.3px;font-size:15.6px;color:#BBBBBB;letter-spacing:-0.137px;">Report</div>
<div class="t " style="left:287.0px;top:706.3px;font-size:15.6px;color:#BBBBBB;letter-spacing:-0.014px;">Security Hotspots</div>
<div class="t " style="left:441.0px;top:706.3px;font-size:15.6px;color:#BBBBBB;letter-spacing:0.151px;">Taint Vulnerabilities</div>
<div class="t " style="left:609.0px;top:706.3px;font-size:15.6px;color:#BBBBBB;letter-spacing:-0.008px;">Log</div>
<div class="r" style="left:194px;top:725px;width:78px;height:3px;background:#8C8C8C;"></div>
<svg class="s" style="left:1944px;top:703px;" width="17" height="17" viewBox="0 0 17 17"><rect x="6.40" y="0" width="4.2" height="5.95" rx="0.8" fill="#C4C6C8" transform="rotate(0 8.5 8.5)"/><rect x="6.40" y="0" width="4.2" height="5.95" rx="0.8" fill="#C4C6C8" transform="rotate(60 8.5 8.5)"/><rect x="6.40" y="0" width="4.2" height="5.95" rx="0.8" fill="#C4C6C8" transform="rotate(120 8.5 8.5)"/><rect x="6.40" y="0" width="4.2" height="5.95" rx="0.8" fill="#C4C6C8" transform="rotate(180 8.5 8.5)"/><rect x="6.40" y="0" width="4.2" height="5.95" rx="0.8" fill="#C4C6C8" transform="rotate(240 8.5 8.5)"/><rect x="6.40" y="0" width="4.2" height="5.95" rx="0.8" fill="#C4C6C8" transform="rotate(300 8.5 8.5)"/><circle cx="8.5" cy="8.5" r="6.29" fill="#C4C6C8"/><circle cx="8.5" cy="8.5" r="2.63" fill="#3C3F41"/></svg>
<div class="r" style="left:1978px;top:710px;width:16px;height:2.6px;background:#C4C6C8;"></div>
<div class="r" style="left:37px;top:728px;width:1px;height:319px;background:#323232;"></div>
<svg class="s" style="left:8px;top:738px;" width="20" height="22" viewBox="0 0 20 22"><path d="M4.5 6.5L10 16L15 6.5" fill="none" stroke="#9AA7B0" stroke-width="1.4"/><circle cx="4.5" cy="6.5" r="3.2" fill="#40B6E0"/><circle cx="15" cy="6.5" r="3.2" fill="#9AA7B0"/><circle cx="10" cy="16" r="3.2" fill="#9AA7B0"/></svg>
<svg class="s" style="left:9px;top:774px;" width="22" height="20" viewBox="0 0 22 20"><path d="M0 1H7L9 3H18V14H0Z" fill="#9AA7B0"/><rect x="12" y="11" width="9" height="8" fill="#1E1F22"/><rect x="14" y="16" width="5" height="1.5" fill="#AFB1B3"/></svg>
<div class="r" style="left:11px;top:809px;width:16px;height:16px;background:#59595B;"></div>
<svg class="s" style="left:8px;top:840px;" width="22" height="22" viewBox="0 0 22 22"><path d="M4 19L16 7" stroke="#9AA7B0" stroke-width="2.6"/><path d="M13.5 4.5A4 4 0 1 0 18.5 9.5" fill="none" stroke="#9AA7B0" stroke-width="2.6"/><path d="M9 10L18 19" stroke="#9AA7B0" stroke-width="2.6"/><path d="M1 7L8 1L11 4.5L4 10.5Z" fill="#3592C4"/></svg>
<svg class="s" style="left:8px;top:875px;" width="20" height="20" viewBox="0 0 20 20"><circle cx="10" cy="10" r="9.5" fill="#AFB1B3"/><path d="M6 6L14 14M14 6L6 14" stroke="#3C3F41" stroke-width="2"/></svg>
<div class="r" style="left:38px;top:752px;width:983px;height:26px;background:#0D293E;"></div>
<svg class="s" style="left:71px;top:732.4px;" width="9" height="12" viewBox="0 0 9 12"><path d="M1.5 1L7 6L1.5 11" fill="none" stroke="#AFB1B3" stroke-width="1.6"/></svg>
<svg class="s" style="left:94px;top:729.4px;" width="21" height="21" viewBox="0 0 21 21"><path d="M10 0.5H16V10H3V6.8L10 0.5Z" fill="#9AA3A9"/><path d="M3 6.3L9.6 0.5V6.3Z" fill="#3C3F41" opacity=".0"/><rect x="3" y="6.2" width="6.8" height="0.9" fill="#555" opacity=".7"/><rect x="0" y="10.8" width="20" height="9.2" fill="#3A93B9"/><path d="M5.2 13V17.2Q5.2 18.6 3.6 18.6" fill="none" stroke="#2B3A42" stroke-width="1.3"/></svg>
<div class="t " style="left:118.5px;top:732.2px;font-size:15.6px;color:#BBBBBB;letter-spacing:-0.379px;">MessageType.java</div>
<div class="t " style="left:251.3px;top:732.2px;font-size:15.6px;color:#8C8C8C;letter-spacing:-0.476px;font-weight:bold;">(6 issues)</div>
<svg class="s" style="left:70px;top:760.4px;" width="12" height="9" viewBox="0 0 12 9"><path d="M1 1.5L6 7L11 1.5" fill="none" stroke="#AFB1B3" stroke-width="1.6"/></svg>
<svg class="s" style="left:94px;top:755.4px;" width="21" height="21" viewBox="0 0 21 21"><path d="M10 0.5H16V10H3V6.8L10 0.5Z" fill="#9AA3A9"/><path d="M3 6.3L9.6 0.5V6.3Z" fill="#3C3F41" opacity=".0"/><rect x="3" y="6.2" width="6.8" height="0.9" fill="#555" opacity=".7"/><rect x="0" y="10.8" width="20" height="9.2" fill="#3A93B9"/><path d="M5.2 13V17.2Q5.2 18.6 3.6 18.6" fill="none" stroke="#2B3A42" stroke-width="1.3"/></svg>
<div class="t " style="left:118.5px;top:758.2px;font-size:15.6px;color:#BBBBBB;letter-spacing:-0.309px;">MessageTypeAppService.java</div>
<div class="t " style="left:328.0px;top:758.2px;font-size:15.6px;color:#8C8C8C;letter-spacing:-0.446px;font-weight:bold;">(5 issues)</div>
<svg class="s" style="left:117px;top:780.9px;" width="19" height="19" viewBox="0 0 19 19"><circle cx="9.5" cy="9.5" r="9.4" fill="#8E979D"/><path d="M6.90 9.50L2.50 9.50A7.0 7.0 0 0 1 6.00 3.44L8.20 7.25Z" fill="#3C3F41"/><path d="M10.80 7.25L13.00 3.44A7.0 7.0 0 0 1 16.50 9.50L12.10 9.50Z" fill="#3C3F41"/><path d="M10.80 11.75L13.00 15.56A7.0 7.0 0 0 1 6.00 15.56L8.20 11.75Z" fill="#3C3F41"/></svg>
<svg class="s" style="left:143px;top:780.9px;" width="20" height="20" viewBox="0 0 20 20"><circle cx="9.5" cy="9.5" r="9.5" fill="#D65450"/><path d="M9.5 15.5V5M3.8 9.8L9.5 4.2L15.2 9.8" fill="none" stroke="#3C3F41" stroke-width="2.2"/></svg>
<div class="t " style="left:167.3px;top:784.2px;font-size:15.6px;color:#808080;letter-spacing:-0.507px;">(36, 23)</div>
<div class="t " style="left:222.3px;top:784.2px;font-size:15.6px;color:#BBBBBB;letter-spacing:0.058px;">Refactor this method to reduce its Cognitive Complexity from 23 to the 15 allowed.</div>
<div class="t " style="left:800.0px;top:785.4px;font-size:13px;color:#808080;letter-spacing:0.452px;">[+11 locations]</div>
<svg class="s" style="left:117px;top:806.9px;" width="19" height="19" viewBox="0 0 19 19"><circle cx="9.5" cy="9.5" r="9.4" fill="#8E979D"/><path d="M6.90 9.50L2.50 9.50A7.0 7.0 0 0 1 6.00 3.44L8.20 7.25Z" fill="#3C3F41"/><path d="M10.80 7.25L13.00 3.44A7.0 7.0 0 0 1 16.50 9.50L12.10 9.50Z" fill="#3C3F41"/><path d="M10.80 11.75L13.00 15.56A7.0 7.0 0 0 1 6.00 15.56L8.20 11.75Z" fill="#3C3F41"/></svg>
<svg class="s" style="left:143px;top:806.9px;" width="20" height="20" viewBox="0 0 20 20"><circle cx="9.5" cy="9.5" r="9.5" fill="#5FAE45"/><path d="M9.5 3.5V14M3.8 9.2L9.5 14.8L15.2 9.2" fill="none" stroke="#3C3F41" stroke-width="2.2"/></svg>
<div class="t " style="left:167.3px;top:810.2px;font-size:15.6px;color:#808080;letter-spacing:-0.470px;">(78, 12)</div>
<div class="t " style="left:222.3px;top:810.2px;font-size:15.6px;color:#BBBBBB;letter-spacing:-0.096px;">Remove this use of &quot;isEmpty&quot;; it is deprecated.</div>
<svg class="s" style="left:117px;top:832.9px;" width="19" height="19" viewBox="0 0 19 19"><circle cx="9.5" cy="9.5" r="9.4" fill="#8E979D"/><path d="M6.90 9.50L2.50 9.50A7.0 7.0 0 0 1 6.00 3.44L8.20 7.25Z" fill="#3C3F41"/><path d="M10.80 7.25L13.00 3.44A7.0 7.0 0 0 1 16.50 9.50L12.10 9.50Z" fill="#3C3F41"/><path d="M10.80 11.75L13.00 15.56A7.0 7.0 0 0 1 6.00 15.56L8.20 11.75Z" fill="#3C3F41"/></svg>
<svg class="s" style="left:143px;top:832.9px;" width="20" height="20" viewBox="0 0 20 20"><circle cx="9.5" cy="9.5" r="9.5" fill="#5FAE45"/><path d="M9.5 3.5V14M3.8 9.2L9.5 14.8L15.2 9.2" fill="none" stroke="#3C3F41" stroke-width="2.2"/></svg>
<div class="t " style="left:167.3px;top:836.2px;font-size:15.6px;color:#808080;letter-spacing:-0.470px;">(88, 28)</div>
<div class="t " style="left:222.3px;top:836.2px;font-size:15.6px;color:#BBBBBB;letter-spacing:-0.038px;">Use isEmpty() to check whether the collection is empty or not.</div>
<svg class="s" style="left:117px;top:858.9px;" width="19" height="19" viewBox="0 0 19 19"><circle cx="9.5" cy="9.5" r="9.4" fill="#8E979D"/><path d="M6.90 9.50L2.50 9.50A7.0 7.0 0 0 1 6.00 3.44L8.20 7.25Z" fill="#3C3F41"/><path d="M10.80 7.25L13.00 3.44A7.0 7.0 0 0 1 16.50 9.50L12.10 9.50Z" fill="#3C3F41"/><path d="M10.80 11.75L13.00 15.56A7.0 7.0 0 0 1 6.00 15.56L8.20 11.75Z" fill="#3C3F41"/></svg>
<svg class="s" style="left:143px;top:858.9px;" width="20" height="20" viewBox="0 0 20 20"><circle cx="9.5" cy="9.5" r="9.5" fill="#5FAE45"/><path d="M9.5 3.5V14M3.8 9.2L9.5 14.8L15.2 9.2" fill="none" stroke="#3C3F41" stroke-width="2.2"/></svg>
<div class="t " style="left:167.3px;top:862.2px;font-size:15.6px;color:#808080;letter-spacing:-0.470px;">(90, 17)</div>
<div class="t " style="left:222.3px;top:862.2px;font-size:15.6px;color:#BBBBBB;letter-spacing:-0.096px;">Remove this use of &quot;isEmpty&quot;; it is deprecated.</div>
<svg class="s" style="left:117px;top:884.9px;" width="19" height="19" viewBox="0 0 19 19"><circle cx="9.5" cy="9.5" r="9.4" fill="#8E979D"/><path d="M6.90 9.50L2.50 9.50A7.0 7.0 0 0 1 6.00 3.44L8.20 7.25Z" fill="#3C3F41"/><path d="M10.80 7.25L13.00 3.44A7.0 7.0 0 0 1 16.50 9.50L12.10 9.50Z" fill="#3C3F41"/><path d="M10.80 11.75L13.00 15.56A7.0 7.0 0 0 1 6.00 15.56L8.20 11.75Z" fill="#3C3F41"/></svg>
<svg class="s" style="left:143px;top:884.9px;" width="20" height="20" viewBox="0 0 20 20"><circle cx="9.5" cy="9.5" r="9.5" fill="#5FAE45"/><path d="M9.5 3.5V14M3.8 9.2L9.5 14.8L15.2 9.2" fill="none" stroke="#3C3F41" stroke-width="2.2"/></svg>
<div class="t " style="left:167.3px;top:888.2px;font-size:15.6px;color:#808080;letter-spacing:-0.470px;">(104, 58)</div>
<div class="t " style="left:230.6px;top:888.2px;font-size:15.6px;color:#BBBBBB;letter-spacing:-0.041px;">Use isEmpty() to check whether the collection is empty or not.</div>
<svg class="s" style="left:71px;top:914.4px;" width="9" height="12" viewBox="0 0 9 12"><path d="M1.5 1L7 6L1.5 11" fill="none" stroke="#AFB1B3" stroke-width="1.6"/></svg>
<svg class="s" style="left:94px;top:911.4px;" width="21" height="21" viewBox="0 0 21 21"><path d="M10 0.5H16V10H3V6.8L10 0.5Z" fill="#9AA3A9"/><path d="M3 6.3L9.6 0.5V6.3Z" fill="#3C3F41" opacity=".0"/><rect x="3" y="6.2" width="6.8" height="0.9" fill="#555" opacity=".7"/><rect x="0" y="10.8" width="20" height="9.2" fill="#3A93B9"/><path d="M5.2 13V17.2Q5.2 18.6 3.6 18.6" fill="none" stroke="#2B3A42" stroke-width="1.3"/></svg>
<div class="t " style="left:118.5px;top:914.2px;font-size:15.6px;color:#BBBBBB;letter-spacing:-0.244px;">MessageTypeConverter.java</div>
<div class="t " style="left:317.6px;top:914.2px;font-size:15.6px;color:#8C8C8C;letter-spacing:-0.376px;font-weight:bold;">(3 issues)</div>
<svg class="s" style="left:71px;top:940.4px;" width="9" height="12" viewBox="0 0 9 12"><path d="M1.5 1L7 6L1.5 11" fill="none" stroke="#AFB1B3" stroke-width="1.6"/></svg>
<svg class="s" style="left:94px;top:937.4px;" width="21" height="21" viewBox="0 0 21 21"><path d="M10 0.5H16V10H3V6.8L10 0.5Z" fill="#9AA3A9"/><path d="M3 6.3L9.6 0.5V6.3Z" fill="#3C3F41" opacity=".0"/><rect x="3" y="6.2" width="6.8" height="0.9" fill="#555" opacity=".7"/><rect x="0" y="10.8" width="20" height="9.2" fill="#3A93B9"/><path d="M5.2 13V17.2Q5.2 18.6 3.6 18.6" fill="none" stroke="#2B3A42" stroke-width="1.3"/></svg>
<div class="t " style="left:118.5px;top:940.2px;font-size:15.6px;color:#BBBBBB;letter-spacing:-0.242px;">MessageTypeJpaRepository.java</div>
<div class="t " style="left:347.5px;top:940.2px;font-size:15.6px;color:#8C8C8C;letter-spacing:-0.321px;font-weight:bold;">(1 issue)</div>
<svg class="s" style="left:71px;top:966.4px;" width="9" height="12" viewBox="0 0 9 12"><path d="M1.5 1L7 6L1.5 11" fill="none" stroke="#AFB1B3" stroke-width="1.6"/></svg>
<svg class="s" style="left:94px;top:963.4px;" width="21" height="21" viewBox="0 0 21 21"><path d="M10 0.5H16V10H3V6.8L10 0.5Z" fill="#9AA3A9"/><path d="M3 6.3L9.6 0.5V6.3Z" fill="#3C3F41" opacity=".0"/><rect x="3" y="6.2" width="6.8" height="0.9" fill="#555" opacity=".7"/><rect x="0" y="10.8" width="20" height="9.2" fill="#3A93B9"/><path d="M5.2 13V17.2Q5.2 18.6 3.6 18.6" fill="none" stroke="#2B3A42" stroke-width="1.3"/></svg>
<div class="t " style="left:118.5px;top:966.2px;font-size:15.6px;color:#BBBBBB;letter-spacing:-0.159px;">MessageTypeMapper.java</div>
<div class="t " style="left:305.5px;top:966.2px;font-size:15.6px;color:#8C8C8C;letter-spacing:-0.366px;font-weight:bold;">(4 issues)</div>
<svg class="s" style="left:71px;top:992.4px;" width="9" height="12" viewBox="0 0 9 12"><path d="M1.5 1L7 6L1.5 11" fill="none" stroke="#AFB1B3" stroke-width="1.6"/></svg>
<svg class="s" style="left:94px;top:989.4px;" width="21" height="21" viewBox="0 0 21 21"><path d="M10 0.5H16V10H3V6.8L10 0.5Z" fill="#9AA3A9"/><path d="M3 6.3L9.6 0.5V6.3Z" fill="#3C3F41" opacity=".0"/><rect x="3" y="6.2" width="6.8" height="0.9" fill="#555" opacity=".7"/><rect x="0" y="10.8" width="20" height="9.2" fill="#3A93B9"/><path d="M5.2 13V17.2Q5.2 18.6 3.6 18.6" fill="none" stroke="#2B3A42" stroke-width="1.3"/></svg>
<div class="t " style="left:118.5px;top:992.2px;font-size:15.6px;color:#BBBBBB;letter-spacing:-0.159px;">MessageTypeMapper.java</div>
<div class="t " style="left:305.5px;top:992.2px;font-size:15.6px;color:#8C8C8C;letter-spacing:-0.366px;font-weight:bold;">(9 issues)</div>
<svg class="s" style="left:71px;top:1018.4000000000001px;" width="9" height="12" viewBox="0 0 9 12"><path d="M1.5 1L7 6L1.5 11" fill="none" stroke="#AFB1B3" stroke-width="1.6"/></svg>
<svg class="s" style="left:94px;top:1015.4000000000001px;" width="21" height="21" viewBox="0 0 21 21"><path d="M10 0.5H16V10H3V6.8L10 0.5Z" fill="#9AA3A9"/><path d="M3 6.3L9.6 0.5V6.3Z" fill="#3C3F41" opacity=".0"/><rect x="3" y="6.2" width="6.8" height="0.9" fill="#555" opacity=".7"/><rect x="0" y="10.8" width="20" height="9.2" fill="#3A93B9"/><path d="M5.2 13V17.2Q5.2 18.6 3.6 18.6" fill="none" stroke="#2B3A42" stroke-width="1.3"/></svg>
<div class="t " style="left:118.5px;top:1018.2px;font-size:15.6px;color:#BBBBBB;"></div>
<div class="t " style="left:317.0px;top:1018.2px;font-size:15.6px;color:#8C8C8C;font-weight:bold;"></div>
<div class="r" style="left:38px;top:1020px;width:983px;height:27px;background:#3C3F41;"></div>
<div class="r" style="left:38px;top:1008px;width:815px;height:10px;background:rgba(255,255,255,0.16);"></div>
<div class="r" style="left:1008px;top:910px;width:10px;height:33px;background:rgba(255,255,255,0.16);"></div>
<div class="t " style="left:41.0px;top:1026.8px;font-size:15.6px;color:#BBBBBB;letter-spacing:0.043px;">Analysis of all project files done 8 minutes ago</div>
<div class="r" style="left:1021px;top:728px;width:1px;height:319px;background:#323232;"></div>
<div class="r" style="left:1022px;top:770px;width:978px;height:1px;background:#323232;"></div>
<div class="t " style="left:1038.6px;top:741.6px;font-size:15.6px;color:#BBBBBB;letter-spacing:-0.271px;">Rule</div>
<div class="t " style="left:1103.0px;top:741.6px;font-size:15.6px;color:#BBBBBB;letter-spacing:-0.086px;">Locations</div>
<div class="r" style="left:1022px;top:767px;width:64px;height:4px;background:#4A88C7;"></div>
<div class="t " style="left:1046.4px;top:802.6px;font-size:15.6px;color:#BBBBBB;letter-spacing:0.083px;">Select a finding to display the rule description</div>
<div class="r" style="left:0px;top:1046px;width:2000px;height:1px;background:#323232;"></div>
<div style="position:absolute;left:0;top:1047px;width:2000px;height:16px;overflow:hidden;">
<svg class="s" style="left:6px;top:8px;" width="20" height="16" viewBox="0 0 20 16"><rect x="1" y="1" width="17" height="14" fill="none" stroke="#AFB1B3" stroke-width="1.6"/><rect x="4" y="1" width="1.6" height="14" fill="#AFB1B3"/></svg>
<div class="t" style="left:35px;top:5.8px;font-size:15.6px;color:#BBBBBB;letter-spacing:-0.003px">Use isEmpty() to check whether the collection is empty or not</div>
<div class="t" style="left:1616px;top:5.8px;font-size:15.6px;color:#BBBBBB;letter-spacing:-0.407px">88:29</div>
<div class="t" style="left:1668px;top:5.8px;font-size:15.6px;color:#BBBBBB;letter-spacing:-1.684px">CRLF</div>
<div class="t" style="left:1718px;top:5.8px;font-size:15.6px;color:#BBBBBB;letter-spacing:-0.638px">UTF-8</div>
<div class="t" style="left:1773px;top:5.8px;font-size:15.6px;color:#BBBBBB;letter-spacing:-0.429px">4 spaces</div>
<svg class="s" style="left:1850px;top:3px;" width="16" height="16" viewBox="0 0 16 16"><circle cx="3" cy="3" r="2.2" fill="#AFB1B3"/><path d="M3 4V14M3 13Q12 13 12 4" fill="none" stroke="#AFB1B3" stroke-width="2"/></svg>
<div class="t" style="left:1870px;top:5.8px;font-size:15.6px;color:#BBBBBB;letter-spacing:0.337px">develop</div>
<svg class="s" style="left:1939px;top:3px;" width="18" height="16" viewBox="0 0 18 16"><rect x="3" y="9" width="12" height="7" fill="#AFB1B3"/><path d="M4 9V5.5A3.5 3.5 0 0 1 11 5.5V6" fill="none" stroke="#AFB1B3" stroke-width="2"/></svg>
<svg class="s" style="left:1969px;top:0px;" width="22" height="16" viewBox="0 0 22 16"><path d="M3 16V13.5A8 8 0 0 1 19 13.5V16" fill="none" stroke="#AFB1B3" stroke-width="2"/></svg>
</div>
</body></html>
